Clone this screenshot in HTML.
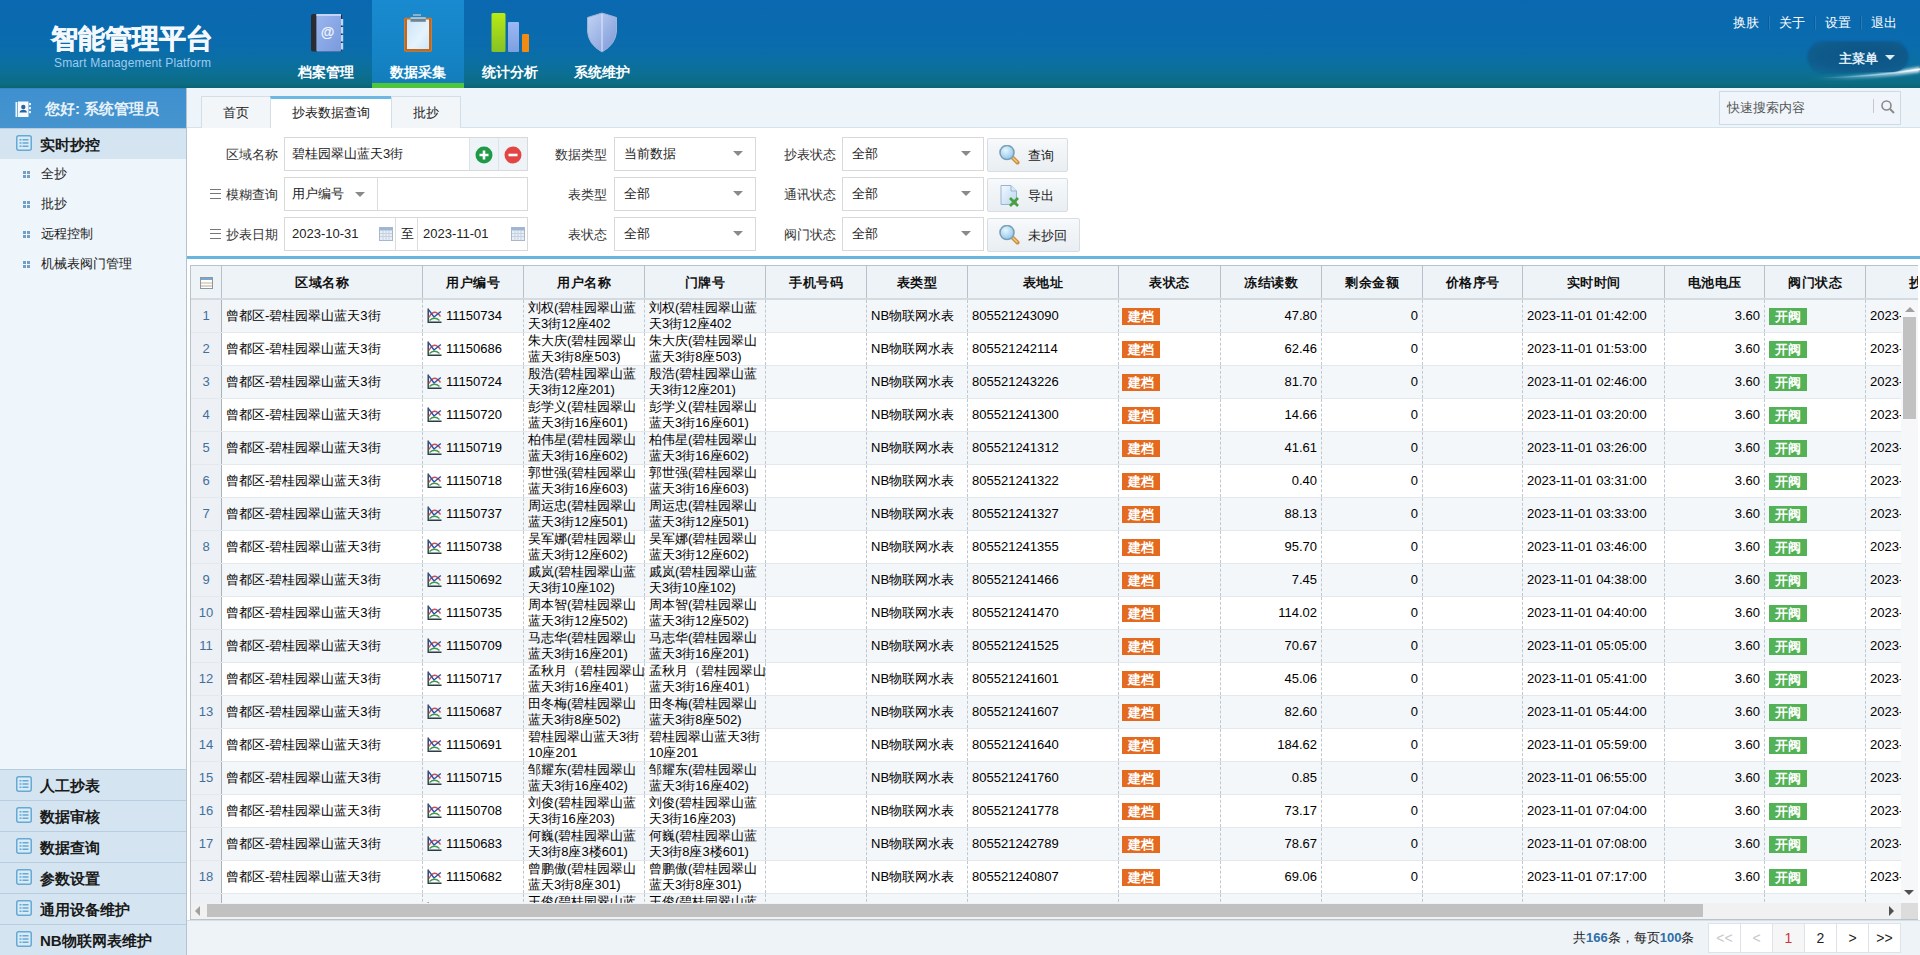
<!DOCTYPE html>
<html><head><meta charset="utf-8">
<style>
*{box-sizing:border-box;}
html,body{margin:0;padding:0;}
body{width:1920px;height:955px;overflow:hidden;position:relative;font-family:"Liberation Sans",sans-serif;font-size:13px;color:#222;background:#fff;}
.abs{position:absolute;}
/* header */
#hdr{position:absolute;left:0;top:0;width:1920px;height:88px;background:linear-gradient(to bottom,#0a68b0 0%,#0a6bad 50%,#0b6fa3 70%,#0c6f92 85%,#0b6c82 95%,#0a6574 100%);}
#logo{position:absolute;left:51px;top:23px;font-size:27px;font-weight:bold;color:#f4f8fc;letter-spacing:0px;line-height:32px;white-space:nowrap;-webkit-text-stroke:0.6px #f4f8fc;}
#logosub{position:absolute;left:54px;top:56px;font-size:12px;letter-spacing:0.15px;color:#9ccbf0;white-space:nowrap;line-height:14px;}
.nav{position:absolute;top:0;width:92px;height:88px;text-align:center;}
.nav.act{background:linear-gradient(to bottom,#1a8ad0 0%,#1584c6 60%,#137cb9 100%);}
.nav.act:after{content:"";position:absolute;left:0;bottom:0;width:92px;height:5px;background:#4fc63a;}
.nav .lbl{position:absolute;left:0;top:63px;width:92px;font-size:14px;font-weight:bold;color:#fff;line-height:18px;}
.nav svg{position:absolute;left:26px;top:11px;}
#toplinks{position:absolute;left:1733px;top:14px;font-size:13px;color:#fff;white-space:nowrap;line-height:18px;}
#toplinks span{display:inline-block;}
#toplinks i{display:inline-block;width:1px;height:14px;background:#0c5c98;box-shadow:1px 0 0 rgba(120,180,230,.25);vertical-align:-3px;margin:0 10px 0 9px;}
#mainmenu{position:absolute;left:1808px;top:42px;width:100px;height:30px;border-radius:15px;background:radial-gradient(ellipse at 55% 45%,#0d5585 0%,#0e5a8b 60%,#12679a 100%);box-shadow:0 0 3px rgba(0,40,80,.35);}
#mainmenu .t{position:absolute;left:31px;top:8px;font-size:13px;font-weight:bold;color:#dfeefa;line-height:18px;}
#mainmenu .ar{position:absolute;left:77px;top:13px;width:0;height:0;border-left:5px solid transparent;border-right:5px solid transparent;border-top:5px solid #dfeefa;}
/* sidebar */
#side{position:absolute;left:0;top:88px;width:187px;height:867px;background:#eef5fb;border-right:1px solid #b5c3ce;}
#sidehd{position:absolute;left:0;top:0;width:186px;height:40px;background:linear-gradient(#3f90cf,#4594cf);border-top:1px solid #3a86c4;}
#sidehd .t{position:absolute;left:45px;top:11px;font-size:15px;font-weight:bold;color:#e8f2fa;line-height:18px;white-space:nowrap;}
.sec{position:absolute;left:0;width:186px;height:31px;background:#d4e4f0;border-top:1px solid #b8cde0;}
.sec .t{position:absolute;left:40px;top:7px;font-size:15px;font-weight:bold;color:#1a1a1a;line-height:18px;white-space:nowrap;}
.sec svg{position:absolute;left:16px;top:6px;}
.item{position:absolute;left:0;width:186px;height:30px;}
.item .t{position:absolute;left:41px;top:7px;font-size:13px;color:#222;line-height:16px;white-space:nowrap;}
.item .b{position:absolute;left:23px;top:12px;width:7px;height:7px;}
.item .b i{position:absolute;width:3px;height:3px;background:#739fc4;}
/* tabs */
#tabbar{position:absolute;left:187px;top:88px;width:1733px;height:40px;background:#eef5fa;border-bottom:1px solid #d6e2ec;}
.tab{position:absolute;top:8px;height:32px;background:#f2f6f9;border:1px solid #d4dee6;border-bottom:none;text-align:center;font-size:13px;line-height:32px;color:#222;}
.tab.act{background:#fff;border-top:3px solid #6bb8e2;line-height:28px;height:33px;}
#search{position:absolute;left:1719px;top:91px;width:182px;height:34px;background:#eff5fa;border:1px solid #d0dae2;}
#search .t{position:absolute;left:7px;top:8px;font-size:13px;color:#555;line-height:16px;}
#search .sep{position:absolute;left:153px;top:7px;width:1px;height:14px;background:#c8c8c8;}
/* form */
#form{position:absolute;left:187px;top:128px;width:1733px;height:128px;background:#fff;}
.lb{position:absolute;font-size:13px;color:#333;line-height:16px;white-space:nowrap;text-align:right;}
.box{position:absolute;height:34px;border:1px solid #d9d9d9;background:#fff;}
.box .v{position:absolute;left:7px;top:8px;font-size:13px;color:#222;line-height:16px;white-space:nowrap;}
.arr{position:absolute;width:0;height:0;border-left:5px solid transparent;border-right:5px solid transparent;border-top:5px solid #8a8a8a;}
.btn{position:absolute;height:34px;border:1px solid #d6dde3;border-radius:2px;background:linear-gradient(#f7f9fb,#e9eef2);}
.btn .v{position:absolute;left:40px;top:9px;font-size:13px;color:#222;line-height:16px;white-space:nowrap;}
.btn svg{position:absolute;left:10px;top:6px;}
.ham{position:absolute;width:11px;height:10px;border-top:1.5px solid #777;border-bottom:1.5px solid #777;}
.ham:after{content:"";position:absolute;left:0;top:2.8px;width:11px;height:1.5px;background:#777;}
#bluel{position:absolute;left:187px;top:256px;width:1733px;height:3px;background:#68b6e0;}
#gridarea{position:absolute;left:187px;top:259px;width:1733px;height:661px;background:#fff;}
/* grid */
#grid{position:absolute;left:190px;top:265px;width:1728px;height:655px;border:1px solid #b9c3cb;border-right:none;background:#fff;overflow:hidden;}
#ghead{position:absolute;left:0;top:0;width:1800px;height:34px;background:#eef3f7;border-bottom:2px solid #d3dae0;}
.hc{position:absolute;top:0;height:32px;border-right:1px solid #b8c1c9;font-weight:bold;font-size:13px;text-align:center;line-height:34px;letter-spacing:0.5px;color:#111;white-space:nowrap;}
.chk{position:absolute;left:9px;top:11px;width:13px;height:12px;border:1px solid #8d979f;background:linear-gradient(#79a7d2 0,#79a7d2 2px,#fff 2px,#fff 4px,#e2d8c8 4px,#e2d8c8 6px,#fff 6px,#fff 7px,#d8d4cc 7px,#d8d4cc 9px,#fff 9px);}
#gbody{position:absolute;left:0;top:34px;width:1710px;height:603px;overflow:hidden;}
.row{position:absolute;left:0;width:1800px;height:33px;border-bottom:1px solid #e3e8ed;}
.row.odd{background:#f4f7fa;}
.row.even{background:#fff;}
.c{position:absolute;top:0;height:32px;border-right:1px dashed #bfc8d0;font-size:13px;color:#000;white-space:nowrap;overflow:hidden;}
.c.rn{background:#edf1f5;color:#3f6f9c;text-align:center;line-height:32px;border-right:1px solid #aab3bb;font-size:13px;}
.c.l{line-height:32px;padding-left:4px;}
.c.bdc{line-height:32px;padding-left:3px;}
.c.r{line-height:32px;text-align:right;padding-right:4px;}
.c.w{white-space:nowrap;line-height:16px;padding:0 0 0 4px;}
.c .ic{vertical-align:-3px;margin-right:4px;margin-left:0px;}
.num{font-size:13px;}
.bd{display:inline-block;height:17px;line-height:17px;width:38px;text-align:center;padding:0;font-weight:bold;color:#fff;font-size:13px;vertical-align:middle;position:relative;top:0px;}
.bd.or{background:#e36a1e;}
.bd.gr{background:#53b255;}
#vscroll{position:absolute;left:1710px;top:34px;width:17px;height:603px;background:#f5f7f9;}
#vscroll .th{position:absolute;left:2px;top:17px;width:13px;height:102px;background:#c1c1c1;}
#hscroll{position:absolute;left:0;top:637px;width:1710px;height:16px;background:#f1f1f1;}
#hscroll .th{position:absolute;left:16px;top:1px;width:1496px;height:13px;background:#c1c1c1;}
#corner{position:absolute;left:1710px;top:637px;width:17px;height:16px;background:#dcdcdc;}
.tri{position:absolute;width:0;height:0;}
/* footer */
#footer{position:absolute;left:187px;top:920px;width:1733px;height:35px;background:#eef3f7;border-top:1px solid #d8dee4;}
#pinfo{position:absolute;left:1386px;top:9px;font-size:13px;color:#222;line-height:16px;white-space:nowrap;}
#pinfo b{color:#2f6fa8;font-weight:bold;}
.pg{position:absolute;top:2px;width:33px;height:30px;border:1px solid #dde3e8;background:#fff;text-align:center;line-height:28px;font-size:14px;color:#222;}
</style></head><body>

<div id="hdr">
  <div id="logo">智能管理平台</div>
  <div id="logosub">Smart Management Platform</div>

  <div class="nav" style="left:280px">
    <svg width="40" height="42" viewBox="0 0 40 42">
      <defs><linearGradient id="bk" x1="0" y1="0" x2="1" y2="1"><stop offset="0" stop-color="#9ab6ee"/><stop offset="1" stop-color="#7a9ade"/></linearGradient></defs>
      <rect x="5" y="3" width="31" height="37.5" rx="2" fill="#2b2c31"/>
      <rect x="10.4" y="3" width="24.6" height="37.5" rx="1" fill="url(#bk)"/>
      <rect x="10.4" y="3" width="24.6" height="2" fill="#c4d4f4"/>
      <rect x="35" y="8" width="2.2" height="6.5" fill="#c6d6f2"/><rect x="35" y="16" width="2.2" height="6.5" fill="#c6d6f2"/><rect x="35" y="24" width="2.2" height="6.5" fill="#c6d6f2"/><rect x="35" y="32" width="2.2" height="6.5" fill="#c6d6f2"/>
      <text x="21.7" y="26" font-size="14" font-weight="bold" font-family="Liberation Sans" fill="#f2f6ff" text-anchor="middle">@</text>
    </svg>
    <div class="lbl">档案管理</div>
  </div>
  <div class="nav act" style="left:372px">
    <svg width="40" height="42" viewBox="0 0 40 42">
      <defs><linearGradient id="pp" x1="0" y1="0" x2="1" y2="1"><stop offset="0" stop-color="#c9e4f8"/><stop offset=".6" stop-color="#e6f3fc"/><stop offset="1" stop-color="#cfe6f7"/></linearGradient></defs>
      <rect x="6" y="6.8" width="28" height="34" rx="1" fill="#b96a28"/>
      <rect x="6.5" y="7.3" width="27" height="33" rx="1" fill="none" stroke="#d98a40" stroke-width=".8" opacity=".7"/>
      <rect x="9" y="8.5" width="22" height="29.5" fill="url(#pp)"/>
      <rect x="12.5" y="6.3" width="15.3" height="4.5" fill="#6f8594"/>
      <rect x="12.5" y="6.3" width="15.3" height="1.5" fill="#c3d2dc"/>
      <rect x="15" y="3" width="8" height="2" fill="#a9bccb" opacity=".8"/>
    </svg>
    <div class="lbl">数据采集</div>
  </div>
  <div class="nav" style="left:464px">
    <svg width="40" height="42" viewBox="0 0 40 42">
      <defs><linearGradient id="gg" x1="0" y1="0" x2="0" y2="1"><stop offset="0" stop-color="#b8ea12"/><stop offset="1" stop-color="#86c226"/></linearGradient><linearGradient id="bg2" x1="0" y1="0" x2="0" y2="1"><stop offset="0" stop-color="#9ab8f4"/><stop offset="1" stop-color="#7e9fe0"/></linearGradient></defs>
      <rect x="1.5" y="2" width="14" height="39" rx="1.5" fill="url(#gg)"/>
      <rect x="18" y="11" width="11" height="30" rx="1" fill="url(#bg2)"/>
      <rect x="32" y="23" width="7" height="18" rx="1" fill="#f38a12"/>
    </svg>
    <div class="lbl">统计分析</div>
  </div>
  <div class="nav" style="left:556px">
    <svg width="40" height="42" viewBox="0 0 40 42">
      <defs><linearGradient id="sg" x1="0" y1="0" x2="1" y2="1"><stop offset="0" stop-color="#c2d4f4"/><stop offset="1" stop-color="#7c97d8"/></linearGradient></defs>
      <path d="M20 2 L34.5 6.5 L34.5 20 Q34 33 20 41 Q6 33 5.5 20 L5.5 6.5 Z" fill="url(#sg)" stroke="#9fb4d4" stroke-width="1"/>
      <path d="M20 3 L20 40" stroke="#dfe8fa" stroke-width="1.5" opacity=".7"/>
    </svg>
    <div class="lbl">系统维护</div>
  </div>

  <div id="toplinks"><span>换肤</span><i></i><span>关于</span><i></i><span>设置</span><i></i><span>退出</span></div>
  <svg class="abs" style="left:1760px;top:58px" width="160" height="30" viewBox="0 0 160 30"><defs><linearGradient id="sw" x1="0" y1="0" x2="1" y2="0"><stop offset="0" stop-color="#bfe6ff" stop-opacity="0"/><stop offset=".6" stop-color="#cdeeff" stop-opacity=".55"/><stop offset="1" stop-color="#ffffff" stop-opacity=".95"/></linearGradient><filter id="bl" x="-20%" y="-100%" width="140%" height="300%"><feGaussianBlur stdDeviation="1.6"/></filter></defs><path d="M50 20 Q110 18 160 9 L160 14 Q110 22 50 21Z" fill="url(#sw)" filter="url(#bl)"/><path d="M60 19.8 Q115 17.5 160 10.5 L160 12 Q115 19.5 60 20.5Z" fill="url(#sw)"/></svg>
  <div id="mainmenu"><span class="t">主菜单</span><span class="ar"></span></div>
</div>

<div id="side">
  <div id="sidehd">
    <svg class="abs" style="left:15px;top:12px" width="17" height="17" viewBox="0 0 17 17"><rect x="0.5" y="1" width="1.8" height="15" fill="#f2f7fc"/><rect x="3" y="0.5" width="10.5" height="15.5" fill="#f7fafd"/><rect x="14" y="2" width="2" height="2.2" fill="#e6f0fa"/><rect x="14" y="6" width="2" height="2.2" fill="#e6f0fa"/><rect x="14" y="10" width="2" height="2.2" fill="#e6f0fa"/><circle cx="8.3" cy="6" r="2.2" fill="#2a659f"/><path d="M4.5 11.5 Q5 8.8 8.3 8.8 Q11.6 8.8 12 11.5Z" fill="#2a659f"/></svg>
    <span class="t">您好: 系统管理员</span>
  </div>
  <div class="sec" style="top:40px;height:31px;">
    <svg width="16" height="16" viewBox="0 0 16 16"><rect x="0.75" y="0.75" width="14.5" height="14.5" rx="2" fill="#d9ebf7" stroke="#67a9d3" stroke-width="1.5"/><rect x="3.5" y="4" width="2" height="1.5" fill="#67a9d3"/><rect x="6.5" y="4" width="6" height="1.5" fill="#67a9d3"/><rect x="3.5" y="7.25" width="2" height="1.5" fill="#67a9d3"/><rect x="6.5" y="7.25" width="6" height="1.5" fill="#67a9d3"/><rect x="3.5" y="10.5" width="2" height="1.5" fill="#67a9d3"/><rect x="6.5" y="10.5" width="6" height="1.5" fill="#67a9d3"/></svg>
    <span class="t">实时抄控</span>
  </div>
  <div class="item" style="top:71px"><span class="b"><i style="left:0;top:0"></i><i style="left:4px;top:0"></i><i style="left:0;top:4px"></i><i style="left:4px;top:4px"></i></span><span class="t">全抄</span></div>
  <div class="item" style="top:101px"><span class="b"><i style="left:0;top:0"></i><i style="left:4px;top:0"></i><i style="left:0;top:4px"></i><i style="left:4px;top:4px"></i></span><span class="t">批抄</span></div>
  <div class="item" style="top:131px"><span class="b"><i style="left:0;top:0"></i><i style="left:4px;top:0"></i><i style="left:0;top:4px"></i><i style="left:4px;top:4px"></i></span><span class="t">远程控制</span></div>
  <div class="item" style="top:161px"><span class="b"><i style="left:0;top:0"></i><i style="left:4px;top:0"></i><i style="left:0;top:4px"></i><i style="left:4px;top:4px"></i></span><span class="t">机械表阀门管理</span></div>

  <div class="sec" style="top:681px"><svg width="16" height="16" viewBox="0 0 16 16"><rect x="0.75" y="0.75" width="14.5" height="14.5" rx="2" fill="#d9ebf7" stroke="#67a9d3" stroke-width="1.5"/><rect x="3.5" y="4" width="2" height="1.5" fill="#67a9d3"/><rect x="6.5" y="4" width="6" height="1.5" fill="#67a9d3"/><rect x="3.5" y="7.25" width="2" height="1.5" fill="#67a9d3"/><rect x="6.5" y="7.25" width="6" height="1.5" fill="#67a9d3"/><rect x="3.5" y="10.5" width="2" height="1.5" fill="#67a9d3"/><rect x="6.5" y="10.5" width="6" height="1.5" fill="#67a9d3"/></svg><span class="t">人工抄表</span></div>
<div class="sec" style="top:712px"><svg width="16" height="16" viewBox="0 0 16 16"><rect x="0.75" y="0.75" width="14.5" height="14.5" rx="2" fill="#d9ebf7" stroke="#67a9d3" stroke-width="1.5"/><rect x="3.5" y="4" width="2" height="1.5" fill="#67a9d3"/><rect x="6.5" y="4" width="6" height="1.5" fill="#67a9d3"/><rect x="3.5" y="7.25" width="2" height="1.5" fill="#67a9d3"/><rect x="6.5" y="7.25" width="6" height="1.5" fill="#67a9d3"/><rect x="3.5" y="10.5" width="2" height="1.5" fill="#67a9d3"/><rect x="6.5" y="10.5" width="6" height="1.5" fill="#67a9d3"/></svg><span class="t">数据审核</span></div>
<div class="sec" style="top:743px"><svg width="16" height="16" viewBox="0 0 16 16"><rect x="0.75" y="0.75" width="14.5" height="14.5" rx="2" fill="#d9ebf7" stroke="#67a9d3" stroke-width="1.5"/><rect x="3.5" y="4" width="2" height="1.5" fill="#67a9d3"/><rect x="6.5" y="4" width="6" height="1.5" fill="#67a9d3"/><rect x="3.5" y="7.25" width="2" height="1.5" fill="#67a9d3"/><rect x="6.5" y="7.25" width="6" height="1.5" fill="#67a9d3"/><rect x="3.5" y="10.5" width="2" height="1.5" fill="#67a9d3"/><rect x="6.5" y="10.5" width="6" height="1.5" fill="#67a9d3"/></svg><span class="t">数据查询</span></div>
<div class="sec" style="top:774px"><svg width="16" height="16" viewBox="0 0 16 16"><rect x="0.75" y="0.75" width="14.5" height="14.5" rx="2" fill="#d9ebf7" stroke="#67a9d3" stroke-width="1.5"/><rect x="3.5" y="4" width="2" height="1.5" fill="#67a9d3"/><rect x="6.5" y="4" width="6" height="1.5" fill="#67a9d3"/><rect x="3.5" y="7.25" width="2" height="1.5" fill="#67a9d3"/><rect x="6.5" y="7.25" width="6" height="1.5" fill="#67a9d3"/><rect x="3.5" y="10.5" width="2" height="1.5" fill="#67a9d3"/><rect x="6.5" y="10.5" width="6" height="1.5" fill="#67a9d3"/></svg><span class="t">参数设置</span></div>
<div class="sec" style="top:805px"><svg width="16" height="16" viewBox="0 0 16 16"><rect x="0.75" y="0.75" width="14.5" height="14.5" rx="2" fill="#d9ebf7" stroke="#67a9d3" stroke-width="1.5"/><rect x="3.5" y="4" width="2" height="1.5" fill="#67a9d3"/><rect x="6.5" y="4" width="6" height="1.5" fill="#67a9d3"/><rect x="3.5" y="7.25" width="2" height="1.5" fill="#67a9d3"/><rect x="6.5" y="7.25" width="6" height="1.5" fill="#67a9d3"/><rect x="3.5" y="10.5" width="2" height="1.5" fill="#67a9d3"/><rect x="6.5" y="10.5" width="6" height="1.5" fill="#67a9d3"/></svg><span class="t">通用设备维护</span></div>
<div class="sec" style="top:836px"><svg width="16" height="16" viewBox="0 0 16 16"><rect x="0.75" y="0.75" width="14.5" height="14.5" rx="2" fill="#d9ebf7" stroke="#67a9d3" stroke-width="1.5"/><rect x="3.5" y="4" width="2" height="1.5" fill="#67a9d3"/><rect x="6.5" y="4" width="6" height="1.5" fill="#67a9d3"/><rect x="3.5" y="7.25" width="2" height="1.5" fill="#67a9d3"/><rect x="6.5" y="7.25" width="6" height="1.5" fill="#67a9d3"/><rect x="3.5" y="10.5" width="2" height="1.5" fill="#67a9d3"/><rect x="6.5" y="10.5" width="6" height="1.5" fill="#67a9d3"/></svg><span class="t">NB物联网表维护</span></div>
</div>

<div id="tabbar">
  <div class="tab" style="left:14px;width:70px">首页</div>
  <div class="tab act" style="left:83px;width:122px">抄表数据查询</div>
  <div class="tab" style="left:204px;width:70px">批抄</div>
</div>
<div id="search"><span class="t">快速搜索内容</span><span class="sep"></span>
  <svg class="abs" style="left:160px;top:7px" width="16" height="16" viewBox="0 0 16 16"><circle cx="6.5" cy="6.5" r="4.5" fill="none" stroke="#8a8a8a" stroke-width="1.6"/><path d="M10 10 L14 14" stroke="#8a8a8a" stroke-width="2"/></svg>
</div>

<div id="form"></div>
<div class="lb" style="left:218px;top:147px;width:60px">区域名称</div>
<div class="box" style="left:284px;top:137px;width:244px"><span class="v">碧桂园翠山蓝天3街</span></div>
<div class="abs" style="left:469px;top:138px;width:29px;height:32px;background:#eef3f7;border-left:1px solid #dde3e8;"></div>
<div class="abs" style="left:498px;top:138px;width:29px;height:32px;background:#eef3f7;border-left:1px solid #dde3e8;"></div>
<div class="abs" style="left:475px;top:146px;width:18px;height:18px"><svg width="18" height="18" viewBox="0 0 18 18"><circle cx="9" cy="9" r="8.5" fill="#1e9a47"/><path d="M4.5 9H13.5M9 4.5V13.5" stroke="#fff" stroke-width="2.6"/></svg></div>
<div class="abs" style="left:504px;top:146px;width:18px;height:18px"><svg width="18" height="18" viewBox="0 0 18 18"><circle cx="9" cy="9" r="8.5" fill="#e34545"/><path d="M4.5 9H13.5" stroke="#fff" stroke-width="2.6"/></svg></div>
<div class="ham" style="left:210px;top:189px"></div>
<div class="lb" style="left:218px;top:187px;width:60px">模糊查询</div>
<div class="box" style="left:284px;top:177px;width:244px"><span class="v">用户编号</span><span class="arr" style="left:70px;top:14px"></span><span class="abs" style="left:92px;top:0;width:1px;height:32px;background:#dcdcdc"></span></div>
<div class="ham" style="left:210px;top:229px"></div>
<div class="lb" style="left:218px;top:227px;width:60px">抄表日期</div>
<div class="box" style="left:284px;top:217px;width:244px"><span class="v">2023-10-31</span><span class="abs" style="left:94px;top:9px"><svg width="14" height="14" viewBox="0 0 14 14"><rect x="0.5" y="0.5" width="13" height="13" fill="#e8eef6" stroke="#a8b8cc"/><rect x="0.5" y="0.5" width="13" height="3" fill="#9fb6d2"/><path d="M1 6.5H13M1 9.5H13M4 4V13M7 4V13M10 4V13" stroke="#c5d2e2" stroke-width="1"/></svg></span><span class="abs" style="left:110px;top:0;width:1px;height:32px;background:#dcdcdc"></span><span class="v" style="left:116px">至</span><span class="abs" style="left:132px;top:0;width:1px;height:32px;background:#dcdcdc"></span><span class="v" style="left:138px">2023-11-01</span><span class="abs" style="left:226px;top:9px"><svg width="14" height="14" viewBox="0 0 14 14"><rect x="0.5" y="0.5" width="13" height="13" fill="#e8eef6" stroke="#a8b8cc"/><rect x="0.5" y="0.5" width="13" height="3" fill="#9fb6d2"/><path d="M1 6.5H13M1 9.5H13M4 4V13M7 4V13M10 4V13" stroke="#c5d2e2" stroke-width="1"/></svg></span></div>
<div class="lb" style="left:547px;top:147px;width:60px">数据类型</div>
<div class="box" style="left:614px;top:137px;width:142px"><span class="v" style="left:9px">当前数据</span><span class="arr" style="left:118px;top:13px"></span></div>
<div class="lb" style="left:547px;top:187px;width:60px">表类型</div>
<div class="box" style="left:614px;top:177px;width:142px"><span class="v" style="left:9px">全部</span><span class="arr" style="left:118px;top:13px"></span></div>
<div class="lb" style="left:547px;top:227px;width:60px">表状态</div>
<div class="box" style="left:614px;top:217px;width:142px"><span class="v" style="left:9px">全部</span><span class="arr" style="left:118px;top:13px"></span></div>
<div class="lb" style="left:776px;top:147px;width:60px">抄表状态</div>
<div class="box" style="left:842px;top:137px;width:142px"><span class="v" style="left:9px">全部</span><span class="arr" style="left:118px;top:13px"></span></div>
<div class="lb" style="left:776px;top:187px;width:60px">通讯状态</div>
<div class="box" style="left:842px;top:177px;width:142px"><span class="v" style="left:9px">全部</span><span class="arr" style="left:118px;top:13px"></span></div>
<div class="lb" style="left:776px;top:227px;width:60px">阀门状态</div>
<div class="box" style="left:842px;top:217px;width:142px"><span class="v" style="left:9px">全部</span><span class="arr" style="left:118px;top:13px"></span></div>
<div class="btn" style="left:987px;top:138px;width:81px"><svg width="24" height="22" viewBox="0 0 24 22"><defs><radialGradient id="lg" cx=".4" cy=".35" r=".7"><stop offset="0" stop-color="#e8f6fe"/><stop offset="1" stop-color="#8cc6ea"/></radialGradient></defs><path d="M14 12 L19.5 17.5" stroke="#c98f3c" stroke-width="4" stroke-linecap="round"/><path d="M14 12 L19 17" stroke="#f0c884" stroke-width="1.6" stroke-linecap="round"/><circle cx="9" cy="7.5" r="7" fill="url(#lg)" stroke="#7a9fb8" stroke-width="1.6"/></svg><span class="v">查询</span></div>
<div class="btn" style="left:987px;top:178px;width:81px"><div class="abs" style="left:0;top:0;line-height:0"><svg width="24" height="24" viewBox="0 0 24 24"><defs><linearGradient id="dg" x1="0" y1="0" x2="1" y2="1"><stop offset="0" stop-color="#f4f9fe"/><stop offset="1" stop-color="#b9d6f0"/></linearGradient></defs><path d="M3 0.5H13L18.5 6V19.5H3Z" fill="url(#dg)" stroke="#94b6d4" stroke-width="1"/><path d="M13 0.5V6H18.5" fill="#dbe9f6" stroke="#94b6d4" stroke-width="1"/><path d="M12 13L20 21M20 13L12 21" stroke="#4aa040" stroke-width="2.8"/></svg></div><span class="v">导出</span></div>
<div class="btn" style="left:987px;top:218px;width:93px"><svg width="24" height="22" viewBox="0 0 24 22"><defs><radialGradient id="lg" cx=".4" cy=".35" r=".7"><stop offset="0" stop-color="#e8f6fe"/><stop offset="1" stop-color="#8cc6ea"/></radialGradient></defs><path d="M14 12 L19.5 17.5" stroke="#c98f3c" stroke-width="4" stroke-linecap="round"/><path d="M14 12 L19 17" stroke="#f0c884" stroke-width="1.6" stroke-linecap="round"/><circle cx="9" cy="7.5" r="7" fill="url(#lg)" stroke="#7a9fb8" stroke-width="1.6"/></svg><span class="v">未抄回</span></div>
<div id="bluel"></div>
<div id="gridarea"></div>

<div id="grid">
  <div id="ghead">
<div class="hc" style="left:0px;width:31px"><span class="chk"></span></div>
<div class="hc" style="left:31px;width:201px">区域名称</div>
<div class="hc" style="left:232px;width:101px">用户编号</div>
<div class="hc" style="left:333px;width:121px">用户名称</div>
<div class="hc" style="left:454px;width:121px">门牌号</div>
<div class="hc" style="left:575px;width:101px">手机号码</div>
<div class="hc" style="left:676px;width:101px">表类型</div>
<div class="hc" style="left:777px;width:151px">表地址</div>
<div class="hc" style="left:928px;width:102px">表状态</div>
<div class="hc" style="left:1030px;width:101px">冻结读数</div>
<div class="hc" style="left:1131px;width:101px">剩余金额</div>
<div class="hc" style="left:1232px;width:100px">价格序号</div>
<div class="hc" style="left:1332px;width:142px">实时时间</div>
<div class="hc" style="left:1474px;width:100px">电池电压</div>
<div class="hc" style="left:1574px;width:101px">阀门状态</div>
<div class="hc" style="left:1675px;width:140px">抄表时间</div>
  </div>
  <div id="gbody">
<div class="row odd" style="top:0px"><div class="c rn" style="left:0px;width:31px">1</div><div class="c l" style="left:31px;width:201px">曾都区-碧桂园翠山蓝天3街</div><div class="c l" style="left:232px;width:101px"><svg class="ic" width="15" height="15" viewBox="0 0 15 15"><path d="M1.2 0.5V14.2H14.5" stroke="#2c3c48" stroke-width="1.4" fill="none"/><path d="M2 9.5Q7 -0.5 13.5 8.5" stroke="#c9514f" stroke-width="1.3" fill="none"/><path d="M1.8 2L7 9L13.8 3.5" stroke="#2f4fae" stroke-width="1.4" fill="none"/><path d="M2.5 12.5Q7.5 8 12.5 12.5" stroke="#3f9a45" stroke-width="1.3" fill="none"/></svg><span class="num">11150734</span></div><div class="c w" style="left:333px;width:121px">刘权(碧桂园翠山蓝<br>天3街12座402</div><div class="c w" style="left:454px;width:121px">刘权(碧桂园翠山蓝<br>天3街12座402</div><div class="c l" style="left:575px;width:101px"></div><div class="c l" style="left:676px;width:101px">NB物联网水表</div><div class="c l" style="left:777px;width:151px"><span class="num">805521243090</span></div><div class="c bdc" style="left:928px;width:102px"><span class="bd or">建档</span></div><div class="c r" style="left:1030px;width:101px"><span class="num">47.80</span></div><div class="c r" style="left:1131px;width:101px">0</div><div class="c l" style="left:1232px;width:100px"></div><div class="c l" style="left:1332px;width:142px"><span class="num">2023-11-01 01:42:00</span></div><div class="c r" style="left:1474px;width:100px"><span class="num">3.60</span></div><div class="c l" style="left:1574px;width:101px"><span class="bd gr">开阀</span></div><div class="c l" style="left:1675px;width:140px"><span class="num">2023-11-01</span></div></div>
<div class="row even" style="top:33px"><div class="c rn" style="left:0px;width:31px">2</div><div class="c l" style="left:31px;width:201px">曾都区-碧桂园翠山蓝天3街</div><div class="c l" style="left:232px;width:101px"><svg class="ic" width="15" height="15" viewBox="0 0 15 15"><path d="M1.2 0.5V14.2H14.5" stroke="#2c3c48" stroke-width="1.4" fill="none"/><path d="M2 9.5Q7 -0.5 13.5 8.5" stroke="#c9514f" stroke-width="1.3" fill="none"/><path d="M1.8 2L7 9L13.8 3.5" stroke="#2f4fae" stroke-width="1.4" fill="none"/><path d="M2.5 12.5Q7.5 8 12.5 12.5" stroke="#3f9a45" stroke-width="1.3" fill="none"/></svg><span class="num">11150686</span></div><div class="c w" style="left:333px;width:121px">朱大庆(碧桂园翠山<br>蓝天3街8座503)</div><div class="c w" style="left:454px;width:121px">朱大庆(碧桂园翠山<br>蓝天3街8座503)</div><div class="c l" style="left:575px;width:101px"></div><div class="c l" style="left:676px;width:101px">NB物联网水表</div><div class="c l" style="left:777px;width:151px"><span class="num">805521242114</span></div><div class="c bdc" style="left:928px;width:102px"><span class="bd or">建档</span></div><div class="c r" style="left:1030px;width:101px"><span class="num">62.46</span></div><div class="c r" style="left:1131px;width:101px">0</div><div class="c l" style="left:1232px;width:100px"></div><div class="c l" style="left:1332px;width:142px"><span class="num">2023-11-01 01:53:00</span></div><div class="c r" style="left:1474px;width:100px"><span class="num">3.60</span></div><div class="c l" style="left:1574px;width:101px"><span class="bd gr">开阀</span></div><div class="c l" style="left:1675px;width:140px"><span class="num">2023-11-01</span></div></div>
<div class="row odd" style="top:66px"><div class="c rn" style="left:0px;width:31px">3</div><div class="c l" style="left:31px;width:201px">曾都区-碧桂园翠山蓝天3街</div><div class="c l" style="left:232px;width:101px"><svg class="ic" width="15" height="15" viewBox="0 0 15 15"><path d="M1.2 0.5V14.2H14.5" stroke="#2c3c48" stroke-width="1.4" fill="none"/><path d="M2 9.5Q7 -0.5 13.5 8.5" stroke="#c9514f" stroke-width="1.3" fill="none"/><path d="M1.8 2L7 9L13.8 3.5" stroke="#2f4fae" stroke-width="1.4" fill="none"/><path d="M2.5 12.5Q7.5 8 12.5 12.5" stroke="#3f9a45" stroke-width="1.3" fill="none"/></svg><span class="num">11150724</span></div><div class="c w" style="left:333px;width:121px">殷浩(碧桂园翠山蓝<br>天3街12座201)</div><div class="c w" style="left:454px;width:121px">殷浩(碧桂园翠山蓝<br>天3街12座201)</div><div class="c l" style="left:575px;width:101px"></div><div class="c l" style="left:676px;width:101px">NB物联网水表</div><div class="c l" style="left:777px;width:151px"><span class="num">805521243226</span></div><div class="c bdc" style="left:928px;width:102px"><span class="bd or">建档</span></div><div class="c r" style="left:1030px;width:101px"><span class="num">81.70</span></div><div class="c r" style="left:1131px;width:101px">0</div><div class="c l" style="left:1232px;width:100px"></div><div class="c l" style="left:1332px;width:142px"><span class="num">2023-11-01 02:46:00</span></div><div class="c r" style="left:1474px;width:100px"><span class="num">3.60</span></div><div class="c l" style="left:1574px;width:101px"><span class="bd gr">开阀</span></div><div class="c l" style="left:1675px;width:140px"><span class="num">2023-11-01</span></div></div>
<div class="row even" style="top:99px"><div class="c rn" style="left:0px;width:31px">4</div><div class="c l" style="left:31px;width:201px">曾都区-碧桂园翠山蓝天3街</div><div class="c l" style="left:232px;width:101px"><svg class="ic" width="15" height="15" viewBox="0 0 15 15"><path d="M1.2 0.5V14.2H14.5" stroke="#2c3c48" stroke-width="1.4" fill="none"/><path d="M2 9.5Q7 -0.5 13.5 8.5" stroke="#c9514f" stroke-width="1.3" fill="none"/><path d="M1.8 2L7 9L13.8 3.5" stroke="#2f4fae" stroke-width="1.4" fill="none"/><path d="M2.5 12.5Q7.5 8 12.5 12.5" stroke="#3f9a45" stroke-width="1.3" fill="none"/></svg><span class="num">11150720</span></div><div class="c w" style="left:333px;width:121px">彭学义(碧桂园翠山<br>蓝天3街16座601)</div><div class="c w" style="left:454px;width:121px">彭学义(碧桂园翠山<br>蓝天3街16座601)</div><div class="c l" style="left:575px;width:101px"></div><div class="c l" style="left:676px;width:101px">NB物联网水表</div><div class="c l" style="left:777px;width:151px"><span class="num">805521241300</span></div><div class="c bdc" style="left:928px;width:102px"><span class="bd or">建档</span></div><div class="c r" style="left:1030px;width:101px"><span class="num">14.66</span></div><div class="c r" style="left:1131px;width:101px">0</div><div class="c l" style="left:1232px;width:100px"></div><div class="c l" style="left:1332px;width:142px"><span class="num">2023-11-01 03:20:00</span></div><div class="c r" style="left:1474px;width:100px"><span class="num">3.60</span></div><div class="c l" style="left:1574px;width:101px"><span class="bd gr">开阀</span></div><div class="c l" style="left:1675px;width:140px"><span class="num">2023-11-01</span></div></div>
<div class="row odd" style="top:132px"><div class="c rn" style="left:0px;width:31px">5</div><div class="c l" style="left:31px;width:201px">曾都区-碧桂园翠山蓝天3街</div><div class="c l" style="left:232px;width:101px"><svg class="ic" width="15" height="15" viewBox="0 0 15 15"><path d="M1.2 0.5V14.2H14.5" stroke="#2c3c48" stroke-width="1.4" fill="none"/><path d="M2 9.5Q7 -0.5 13.5 8.5" stroke="#c9514f" stroke-width="1.3" fill="none"/><path d="M1.8 2L7 9L13.8 3.5" stroke="#2f4fae" stroke-width="1.4" fill="none"/><path d="M2.5 12.5Q7.5 8 12.5 12.5" stroke="#3f9a45" stroke-width="1.3" fill="none"/></svg><span class="num">11150719</span></div><div class="c w" style="left:333px;width:121px">柏伟星(碧桂园翠山<br>蓝天3街16座602)</div><div class="c w" style="left:454px;width:121px">柏伟星(碧桂园翠山<br>蓝天3街16座602)</div><div class="c l" style="left:575px;width:101px"></div><div class="c l" style="left:676px;width:101px">NB物联网水表</div><div class="c l" style="left:777px;width:151px"><span class="num">805521241312</span></div><div class="c bdc" style="left:928px;width:102px"><span class="bd or">建档</span></div><div class="c r" style="left:1030px;width:101px"><span class="num">41.61</span></div><div class="c r" style="left:1131px;width:101px">0</div><div class="c l" style="left:1232px;width:100px"></div><div class="c l" style="left:1332px;width:142px"><span class="num">2023-11-01 03:26:00</span></div><div class="c r" style="left:1474px;width:100px"><span class="num">3.60</span></div><div class="c l" style="left:1574px;width:101px"><span class="bd gr">开阀</span></div><div class="c l" style="left:1675px;width:140px"><span class="num">2023-11-01</span></div></div>
<div class="row even" style="top:165px"><div class="c rn" style="left:0px;width:31px">6</div><div class="c l" style="left:31px;width:201px">曾都区-碧桂园翠山蓝天3街</div><div class="c l" style="left:232px;width:101px"><svg class="ic" width="15" height="15" viewBox="0 0 15 15"><path d="M1.2 0.5V14.2H14.5" stroke="#2c3c48" stroke-width="1.4" fill="none"/><path d="M2 9.5Q7 -0.5 13.5 8.5" stroke="#c9514f" stroke-width="1.3" fill="none"/><path d="M1.8 2L7 9L13.8 3.5" stroke="#2f4fae" stroke-width="1.4" fill="none"/><path d="M2.5 12.5Q7.5 8 12.5 12.5" stroke="#3f9a45" stroke-width="1.3" fill="none"/></svg><span class="num">11150718</span></div><div class="c w" style="left:333px;width:121px">郭世强(碧桂园翠山<br>蓝天3街16座603)</div><div class="c w" style="left:454px;width:121px">郭世强(碧桂园翠山<br>蓝天3街16座603)</div><div class="c l" style="left:575px;width:101px"></div><div class="c l" style="left:676px;width:101px">NB物联网水表</div><div class="c l" style="left:777px;width:151px"><span class="num">805521241322</span></div><div class="c bdc" style="left:928px;width:102px"><span class="bd or">建档</span></div><div class="c r" style="left:1030px;width:101px"><span class="num">0.40</span></div><div class="c r" style="left:1131px;width:101px">0</div><div class="c l" style="left:1232px;width:100px"></div><div class="c l" style="left:1332px;width:142px"><span class="num">2023-11-01 03:31:00</span></div><div class="c r" style="left:1474px;width:100px"><span class="num">3.60</span></div><div class="c l" style="left:1574px;width:101px"><span class="bd gr">开阀</span></div><div class="c l" style="left:1675px;width:140px"><span class="num">2023-11-01</span></div></div>
<div class="row odd" style="top:198px"><div class="c rn" style="left:0px;width:31px">7</div><div class="c l" style="left:31px;width:201px">曾都区-碧桂园翠山蓝天3街</div><div class="c l" style="left:232px;width:101px"><svg class="ic" width="15" height="15" viewBox="0 0 15 15"><path d="M1.2 0.5V14.2H14.5" stroke="#2c3c48" stroke-width="1.4" fill="none"/><path d="M2 9.5Q7 -0.5 13.5 8.5" stroke="#c9514f" stroke-width="1.3" fill="none"/><path d="M1.8 2L7 9L13.8 3.5" stroke="#2f4fae" stroke-width="1.4" fill="none"/><path d="M2.5 12.5Q7.5 8 12.5 12.5" stroke="#3f9a45" stroke-width="1.3" fill="none"/></svg><span class="num">11150737</span></div><div class="c w" style="left:333px;width:121px">周运忠(碧桂园翠山<br>蓝天3街12座501)</div><div class="c w" style="left:454px;width:121px">周运忠(碧桂园翠山<br>蓝天3街12座501)</div><div class="c l" style="left:575px;width:101px"></div><div class="c l" style="left:676px;width:101px">NB物联网水表</div><div class="c l" style="left:777px;width:151px"><span class="num">805521241327</span></div><div class="c bdc" style="left:928px;width:102px"><span class="bd or">建档</span></div><div class="c r" style="left:1030px;width:101px"><span class="num">88.13</span></div><div class="c r" style="left:1131px;width:101px">0</div><div class="c l" style="left:1232px;width:100px"></div><div class="c l" style="left:1332px;width:142px"><span class="num">2023-11-01 03:33:00</span></div><div class="c r" style="left:1474px;width:100px"><span class="num">3.60</span></div><div class="c l" style="left:1574px;width:101px"><span class="bd gr">开阀</span></div><div class="c l" style="left:1675px;width:140px"><span class="num">2023-11-01</span></div></div>
<div class="row even" style="top:231px"><div class="c rn" style="left:0px;width:31px">8</div><div class="c l" style="left:31px;width:201px">曾都区-碧桂园翠山蓝天3街</div><div class="c l" style="left:232px;width:101px"><svg class="ic" width="15" height="15" viewBox="0 0 15 15"><path d="M1.2 0.5V14.2H14.5" stroke="#2c3c48" stroke-width="1.4" fill="none"/><path d="M2 9.5Q7 -0.5 13.5 8.5" stroke="#c9514f" stroke-width="1.3" fill="none"/><path d="M1.8 2L7 9L13.8 3.5" stroke="#2f4fae" stroke-width="1.4" fill="none"/><path d="M2.5 12.5Q7.5 8 12.5 12.5" stroke="#3f9a45" stroke-width="1.3" fill="none"/></svg><span class="num">11150738</span></div><div class="c w" style="left:333px;width:121px">吴军娜(碧桂园翠山<br>蓝天3街12座602)</div><div class="c w" style="left:454px;width:121px">吴军娜(碧桂园翠山<br>蓝天3街12座602)</div><div class="c l" style="left:575px;width:101px"></div><div class="c l" style="left:676px;width:101px">NB物联网水表</div><div class="c l" style="left:777px;width:151px"><span class="num">805521241355</span></div><div class="c bdc" style="left:928px;width:102px"><span class="bd or">建档</span></div><div class="c r" style="left:1030px;width:101px"><span class="num">95.70</span></div><div class="c r" style="left:1131px;width:101px">0</div><div class="c l" style="left:1232px;width:100px"></div><div class="c l" style="left:1332px;width:142px"><span class="num">2023-11-01 03:46:00</span></div><div class="c r" style="left:1474px;width:100px"><span class="num">3.60</span></div><div class="c l" style="left:1574px;width:101px"><span class="bd gr">开阀</span></div><div class="c l" style="left:1675px;width:140px"><span class="num">2023-11-01</span></div></div>
<div class="row odd" style="top:264px"><div class="c rn" style="left:0px;width:31px">9</div><div class="c l" style="left:31px;width:201px">曾都区-碧桂园翠山蓝天3街</div><div class="c l" style="left:232px;width:101px"><svg class="ic" width="15" height="15" viewBox="0 0 15 15"><path d="M1.2 0.5V14.2H14.5" stroke="#2c3c48" stroke-width="1.4" fill="none"/><path d="M2 9.5Q7 -0.5 13.5 8.5" stroke="#c9514f" stroke-width="1.3" fill="none"/><path d="M1.8 2L7 9L13.8 3.5" stroke="#2f4fae" stroke-width="1.4" fill="none"/><path d="M2.5 12.5Q7.5 8 12.5 12.5" stroke="#3f9a45" stroke-width="1.3" fill="none"/></svg><span class="num">11150692</span></div><div class="c w" style="left:333px;width:121px">戚岚(碧桂园翠山蓝<br>天3街10座102)</div><div class="c w" style="left:454px;width:121px">戚岚(碧桂园翠山蓝<br>天3街10座102)</div><div class="c l" style="left:575px;width:101px"></div><div class="c l" style="left:676px;width:101px">NB物联网水表</div><div class="c l" style="left:777px;width:151px"><span class="num">805521241466</span></div><div class="c bdc" style="left:928px;width:102px"><span class="bd or">建档</span></div><div class="c r" style="left:1030px;width:101px"><span class="num">7.45</span></div><div class="c r" style="left:1131px;width:101px">0</div><div class="c l" style="left:1232px;width:100px"></div><div class="c l" style="left:1332px;width:142px"><span class="num">2023-11-01 04:38:00</span></div><div class="c r" style="left:1474px;width:100px"><span class="num">3.60</span></div><div class="c l" style="left:1574px;width:101px"><span class="bd gr">开阀</span></div><div class="c l" style="left:1675px;width:140px"><span class="num">2023-11-01</span></div></div>
<div class="row even" style="top:297px"><div class="c rn" style="left:0px;width:31px">10</div><div class="c l" style="left:31px;width:201px">曾都区-碧桂园翠山蓝天3街</div><div class="c l" style="left:232px;width:101px"><svg class="ic" width="15" height="15" viewBox="0 0 15 15"><path d="M1.2 0.5V14.2H14.5" stroke="#2c3c48" stroke-width="1.4" fill="none"/><path d="M2 9.5Q7 -0.5 13.5 8.5" stroke="#c9514f" stroke-width="1.3" fill="none"/><path d="M1.8 2L7 9L13.8 3.5" stroke="#2f4fae" stroke-width="1.4" fill="none"/><path d="M2.5 12.5Q7.5 8 12.5 12.5" stroke="#3f9a45" stroke-width="1.3" fill="none"/></svg><span class="num">11150735</span></div><div class="c w" style="left:333px;width:121px">周本智(碧桂园翠山<br>蓝天3街12座502)</div><div class="c w" style="left:454px;width:121px">周本智(碧桂园翠山<br>蓝天3街12座502)</div><div class="c l" style="left:575px;width:101px"></div><div class="c l" style="left:676px;width:101px">NB物联网水表</div><div class="c l" style="left:777px;width:151px"><span class="num">805521241470</span></div><div class="c bdc" style="left:928px;width:102px"><span class="bd or">建档</span></div><div class="c r" style="left:1030px;width:101px"><span class="num">114.02</span></div><div class="c r" style="left:1131px;width:101px">0</div><div class="c l" style="left:1232px;width:100px"></div><div class="c l" style="left:1332px;width:142px"><span class="num">2023-11-01 04:40:00</span></div><div class="c r" style="left:1474px;width:100px"><span class="num">3.60</span></div><div class="c l" style="left:1574px;width:101px"><span class="bd gr">开阀</span></div><div class="c l" style="left:1675px;width:140px"><span class="num">2023-11-01</span></div></div>
<div class="row odd" style="top:330px"><div class="c rn" style="left:0px;width:31px">11</div><div class="c l" style="left:31px;width:201px">曾都区-碧桂园翠山蓝天3街</div><div class="c l" style="left:232px;width:101px"><svg class="ic" width="15" height="15" viewBox="0 0 15 15"><path d="M1.2 0.5V14.2H14.5" stroke="#2c3c48" stroke-width="1.4" fill="none"/><path d="M2 9.5Q7 -0.5 13.5 8.5" stroke="#c9514f" stroke-width="1.3" fill="none"/><path d="M1.8 2L7 9L13.8 3.5" stroke="#2f4fae" stroke-width="1.4" fill="none"/><path d="M2.5 12.5Q7.5 8 12.5 12.5" stroke="#3f9a45" stroke-width="1.3" fill="none"/></svg><span class="num">11150709</span></div><div class="c w" style="left:333px;width:121px">马志华(碧桂园翠山<br>蓝天3街16座201)</div><div class="c w" style="left:454px;width:121px">马志华(碧桂园翠山<br>蓝天3街16座201)</div><div class="c l" style="left:575px;width:101px"></div><div class="c l" style="left:676px;width:101px">NB物联网水表</div><div class="c l" style="left:777px;width:151px"><span class="num">805521241525</span></div><div class="c bdc" style="left:928px;width:102px"><span class="bd or">建档</span></div><div class="c r" style="left:1030px;width:101px"><span class="num">70.67</span></div><div class="c r" style="left:1131px;width:101px">0</div><div class="c l" style="left:1232px;width:100px"></div><div class="c l" style="left:1332px;width:142px"><span class="num">2023-11-01 05:05:00</span></div><div class="c r" style="left:1474px;width:100px"><span class="num">3.60</span></div><div class="c l" style="left:1574px;width:101px"><span class="bd gr">开阀</span></div><div class="c l" style="left:1675px;width:140px"><span class="num">2023-11-01</span></div></div>
<div class="row even" style="top:363px"><div class="c rn" style="left:0px;width:31px">12</div><div class="c l" style="left:31px;width:201px">曾都区-碧桂园翠山蓝天3街</div><div class="c l" style="left:232px;width:101px"><svg class="ic" width="15" height="15" viewBox="0 0 15 15"><path d="M1.2 0.5V14.2H14.5" stroke="#2c3c48" stroke-width="1.4" fill="none"/><path d="M2 9.5Q7 -0.5 13.5 8.5" stroke="#c9514f" stroke-width="1.3" fill="none"/><path d="M1.8 2L7 9L13.8 3.5" stroke="#2f4fae" stroke-width="1.4" fill="none"/><path d="M2.5 12.5Q7.5 8 12.5 12.5" stroke="#3f9a45" stroke-width="1.3" fill="none"/></svg><span class="num">11150717</span></div><div class="c w" style="left:333px;width:121px">孟秋月（碧桂园翠山<br>蓝天3街16座401）</div><div class="c w" style="left:454px;width:121px">孟秋月（碧桂园翠山<br>蓝天3街16座401）</div><div class="c l" style="left:575px;width:101px"></div><div class="c l" style="left:676px;width:101px">NB物联网水表</div><div class="c l" style="left:777px;width:151px"><span class="num">805521241601</span></div><div class="c bdc" style="left:928px;width:102px"><span class="bd or">建档</span></div><div class="c r" style="left:1030px;width:101px"><span class="num">45.06</span></div><div class="c r" style="left:1131px;width:101px">0</div><div class="c l" style="left:1232px;width:100px"></div><div class="c l" style="left:1332px;width:142px"><span class="num">2023-11-01 05:41:00</span></div><div class="c r" style="left:1474px;width:100px"><span class="num">3.60</span></div><div class="c l" style="left:1574px;width:101px"><span class="bd gr">开阀</span></div><div class="c l" style="left:1675px;width:140px"><span class="num">2023-11-01</span></div></div>
<div class="row odd" style="top:396px"><div class="c rn" style="left:0px;width:31px">13</div><div class="c l" style="left:31px;width:201px">曾都区-碧桂园翠山蓝天3街</div><div class="c l" style="left:232px;width:101px"><svg class="ic" width="15" height="15" viewBox="0 0 15 15"><path d="M1.2 0.5V14.2H14.5" stroke="#2c3c48" stroke-width="1.4" fill="none"/><path d="M2 9.5Q7 -0.5 13.5 8.5" stroke="#c9514f" stroke-width="1.3" fill="none"/><path d="M1.8 2L7 9L13.8 3.5" stroke="#2f4fae" stroke-width="1.4" fill="none"/><path d="M2.5 12.5Q7.5 8 12.5 12.5" stroke="#3f9a45" stroke-width="1.3" fill="none"/></svg><span class="num">11150687</span></div><div class="c w" style="left:333px;width:121px">田冬梅(碧桂园翠山<br>蓝天3街8座502)</div><div class="c w" style="left:454px;width:121px">田冬梅(碧桂园翠山<br>蓝天3街8座502)</div><div class="c l" style="left:575px;width:101px"></div><div class="c l" style="left:676px;width:101px">NB物联网水表</div><div class="c l" style="left:777px;width:151px"><span class="num">805521241607</span></div><div class="c bdc" style="left:928px;width:102px"><span class="bd or">建档</span></div><div class="c r" style="left:1030px;width:101px"><span class="num">82.60</span></div><div class="c r" style="left:1131px;width:101px">0</div><div class="c l" style="left:1232px;width:100px"></div><div class="c l" style="left:1332px;width:142px"><span class="num">2023-11-01 05:44:00</span></div><div class="c r" style="left:1474px;width:100px"><span class="num">3.60</span></div><div class="c l" style="left:1574px;width:101px"><span class="bd gr">开阀</span></div><div class="c l" style="left:1675px;width:140px"><span class="num">2023-11-01</span></div></div>
<div class="row even" style="top:429px"><div class="c rn" style="left:0px;width:31px">14</div><div class="c l" style="left:31px;width:201px">曾都区-碧桂园翠山蓝天3街</div><div class="c l" style="left:232px;width:101px"><svg class="ic" width="15" height="15" viewBox="0 0 15 15"><path d="M1.2 0.5V14.2H14.5" stroke="#2c3c48" stroke-width="1.4" fill="none"/><path d="M2 9.5Q7 -0.5 13.5 8.5" stroke="#c9514f" stroke-width="1.3" fill="none"/><path d="M1.8 2L7 9L13.8 3.5" stroke="#2f4fae" stroke-width="1.4" fill="none"/><path d="M2.5 12.5Q7.5 8 12.5 12.5" stroke="#3f9a45" stroke-width="1.3" fill="none"/></svg><span class="num">11150691</span></div><div class="c w" style="left:333px;width:121px">碧桂园翠山蓝天3街<br>10座201</div><div class="c w" style="left:454px;width:121px">碧桂园翠山蓝天3街<br>10座201</div><div class="c l" style="left:575px;width:101px"></div><div class="c l" style="left:676px;width:101px">NB物联网水表</div><div class="c l" style="left:777px;width:151px"><span class="num">805521241640</span></div><div class="c bdc" style="left:928px;width:102px"><span class="bd or">建档</span></div><div class="c r" style="left:1030px;width:101px"><span class="num">184.62</span></div><div class="c r" style="left:1131px;width:101px">0</div><div class="c l" style="left:1232px;width:100px"></div><div class="c l" style="left:1332px;width:142px"><span class="num">2023-11-01 05:59:00</span></div><div class="c r" style="left:1474px;width:100px"><span class="num">3.60</span></div><div class="c l" style="left:1574px;width:101px"><span class="bd gr">开阀</span></div><div class="c l" style="left:1675px;width:140px"><span class="num">2023-11-01</span></div></div>
<div class="row odd" style="top:462px"><div class="c rn" style="left:0px;width:31px">15</div><div class="c l" style="left:31px;width:201px">曾都区-碧桂园翠山蓝天3街</div><div class="c l" style="left:232px;width:101px"><svg class="ic" width="15" height="15" viewBox="0 0 15 15"><path d="M1.2 0.5V14.2H14.5" stroke="#2c3c48" stroke-width="1.4" fill="none"/><path d="M2 9.5Q7 -0.5 13.5 8.5" stroke="#c9514f" stroke-width="1.3" fill="none"/><path d="M1.8 2L7 9L13.8 3.5" stroke="#2f4fae" stroke-width="1.4" fill="none"/><path d="M2.5 12.5Q7.5 8 12.5 12.5" stroke="#3f9a45" stroke-width="1.3" fill="none"/></svg><span class="num">11150715</span></div><div class="c w" style="left:333px;width:121px">邹耀东(碧桂园翠山<br>蓝天3街16座402)</div><div class="c w" style="left:454px;width:121px">邹耀东(碧桂园翠山<br>蓝天3街16座402)</div><div class="c l" style="left:575px;width:101px"></div><div class="c l" style="left:676px;width:101px">NB物联网水表</div><div class="c l" style="left:777px;width:151px"><span class="num">805521241760</span></div><div class="c bdc" style="left:928px;width:102px"><span class="bd or">建档</span></div><div class="c r" style="left:1030px;width:101px"><span class="num">0.85</span></div><div class="c r" style="left:1131px;width:101px">0</div><div class="c l" style="left:1232px;width:100px"></div><div class="c l" style="left:1332px;width:142px"><span class="num">2023-11-01 06:55:00</span></div><div class="c r" style="left:1474px;width:100px"><span class="num">3.60</span></div><div class="c l" style="left:1574px;width:101px"><span class="bd gr">开阀</span></div><div class="c l" style="left:1675px;width:140px"><span class="num">2023-11-01</span></div></div>
<div class="row even" style="top:495px"><div class="c rn" style="left:0px;width:31px">16</div><div class="c l" style="left:31px;width:201px">曾都区-碧桂园翠山蓝天3街</div><div class="c l" style="left:232px;width:101px"><svg class="ic" width="15" height="15" viewBox="0 0 15 15"><path d="M1.2 0.5V14.2H14.5" stroke="#2c3c48" stroke-width="1.4" fill="none"/><path d="M2 9.5Q7 -0.5 13.5 8.5" stroke="#c9514f" stroke-width="1.3" fill="none"/><path d="M1.8 2L7 9L13.8 3.5" stroke="#2f4fae" stroke-width="1.4" fill="none"/><path d="M2.5 12.5Q7.5 8 12.5 12.5" stroke="#3f9a45" stroke-width="1.3" fill="none"/></svg><span class="num">11150708</span></div><div class="c w" style="left:333px;width:121px">刘俊(碧桂园翠山蓝<br>天3街16座203)</div><div class="c w" style="left:454px;width:121px">刘俊(碧桂园翠山蓝<br>天3街16座203)</div><div class="c l" style="left:575px;width:101px"></div><div class="c l" style="left:676px;width:101px">NB物联网水表</div><div class="c l" style="left:777px;width:151px"><span class="num">805521241778</span></div><div class="c bdc" style="left:928px;width:102px"><span class="bd or">建档</span></div><div class="c r" style="left:1030px;width:101px"><span class="num">73.17</span></div><div class="c r" style="left:1131px;width:101px">0</div><div class="c l" style="left:1232px;width:100px"></div><div class="c l" style="left:1332px;width:142px"><span class="num">2023-11-01 07:04:00</span></div><div class="c r" style="left:1474px;width:100px"><span class="num">3.60</span></div><div class="c l" style="left:1574px;width:101px"><span class="bd gr">开阀</span></div><div class="c l" style="left:1675px;width:140px"><span class="num">2023-11-01</span></div></div>
<div class="row odd" style="top:528px"><div class="c rn" style="left:0px;width:31px">17</div><div class="c l" style="left:31px;width:201px">曾都区-碧桂园翠山蓝天3街</div><div class="c l" style="left:232px;width:101px"><svg class="ic" width="15" height="15" viewBox="0 0 15 15"><path d="M1.2 0.5V14.2H14.5" stroke="#2c3c48" stroke-width="1.4" fill="none"/><path d="M2 9.5Q7 -0.5 13.5 8.5" stroke="#c9514f" stroke-width="1.3" fill="none"/><path d="M1.8 2L7 9L13.8 3.5" stroke="#2f4fae" stroke-width="1.4" fill="none"/><path d="M2.5 12.5Q7.5 8 12.5 12.5" stroke="#3f9a45" stroke-width="1.3" fill="none"/></svg><span class="num">11150683</span></div><div class="c w" style="left:333px;width:121px">何巍(碧桂园翠山蓝<br>天3街8座3楼601)</div><div class="c w" style="left:454px;width:121px">何巍(碧桂园翠山蓝<br>天3街8座3楼601)</div><div class="c l" style="left:575px;width:101px"></div><div class="c l" style="left:676px;width:101px">NB物联网水表</div><div class="c l" style="left:777px;width:151px"><span class="num">805521242789</span></div><div class="c bdc" style="left:928px;width:102px"><span class="bd or">建档</span></div><div class="c r" style="left:1030px;width:101px"><span class="num">78.67</span></div><div class="c r" style="left:1131px;width:101px">0</div><div class="c l" style="left:1232px;width:100px"></div><div class="c l" style="left:1332px;width:142px"><span class="num">2023-11-01 07:08:00</span></div><div class="c r" style="left:1474px;width:100px"><span class="num">3.60</span></div><div class="c l" style="left:1574px;width:101px"><span class="bd gr">开阀</span></div><div class="c l" style="left:1675px;width:140px"><span class="num">2023-11-01</span></div></div>
<div class="row even" style="top:561px"><div class="c rn" style="left:0px;width:31px">18</div><div class="c l" style="left:31px;width:201px">曾都区-碧桂园翠山蓝天3街</div><div class="c l" style="left:232px;width:101px"><svg class="ic" width="15" height="15" viewBox="0 0 15 15"><path d="M1.2 0.5V14.2H14.5" stroke="#2c3c48" stroke-width="1.4" fill="none"/><path d="M2 9.5Q7 -0.5 13.5 8.5" stroke="#c9514f" stroke-width="1.3" fill="none"/><path d="M1.8 2L7 9L13.8 3.5" stroke="#2f4fae" stroke-width="1.4" fill="none"/><path d="M2.5 12.5Q7.5 8 12.5 12.5" stroke="#3f9a45" stroke-width="1.3" fill="none"/></svg><span class="num">11150682</span></div><div class="c w" style="left:333px;width:121px">曾鹏傲(碧桂园翠山<br>蓝天3街8座301)</div><div class="c w" style="left:454px;width:121px">曾鹏傲(碧桂园翠山<br>蓝天3街8座301)</div><div class="c l" style="left:575px;width:101px"></div><div class="c l" style="left:676px;width:101px">NB物联网水表</div><div class="c l" style="left:777px;width:151px"><span class="num">805521240807</span></div><div class="c bdc" style="left:928px;width:102px"><span class="bd or">建档</span></div><div class="c r" style="left:1030px;width:101px"><span class="num">69.06</span></div><div class="c r" style="left:1131px;width:101px">0</div><div class="c l" style="left:1232px;width:100px"></div><div class="c l" style="left:1332px;width:142px"><span class="num">2023-11-01 07:17:00</span></div><div class="c r" style="left:1474px;width:100px"><span class="num">3.60</span></div><div class="c l" style="left:1574px;width:101px"><span class="bd gr">开阀</span></div><div class="c l" style="left:1675px;width:140px"><span class="num">2023-11-01</span></div></div>
<div class="row odd" style="top:594px"><div class="c rn" style="left:0px;width:31px">19</div><div class="c l" style="left:31px;width:201px">曾都区-碧桂园翠山蓝天3街</div><div class="c l" style="left:232px;width:101px"><svg class="ic" width="15" height="15" viewBox="0 0 15 15"><path d="M1.2 0.5V14.2H14.5" stroke="#2c3c48" stroke-width="1.4" fill="none"/><path d="M2 9.5Q7 -0.5 13.5 8.5" stroke="#c9514f" stroke-width="1.3" fill="none"/><path d="M1.8 2L7 9L13.8 3.5" stroke="#2f4fae" stroke-width="1.4" fill="none"/><path d="M2.5 12.5Q7.5 8 12.5 12.5" stroke="#3f9a45" stroke-width="1.3" fill="none"/></svg><span class="num">11150690</span></div><div class="c w" style="left:333px;width:121px">王俊(碧桂园翠山蓝<br>天3街8座302)</div><div class="c w" style="left:454px;width:121px">王俊(碧桂园翠山蓝<br>天3街8座302)</div><div class="c l" style="left:575px;width:101px"></div><div class="c l" style="left:676px;width:101px">NB物联网水表</div><div class="c l" style="left:777px;width:151px"><span class="num">805521240811</span></div><div class="c bdc" style="left:928px;width:102px"></div><div class="c r" style="left:1030px;width:101px"><span class="num">50.12</span></div><div class="c r" style="left:1131px;width:101px">0</div><div class="c l" style="left:1232px;width:100px"></div><div class="c l" style="left:1332px;width:142px"><span class="num">2023-11-01 07:20:00</span></div><div class="c r" style="left:1474px;width:100px"><span class="num">3.60</span></div><div class="c l" style="left:1574px;width:101px"></div><div class="c l" style="left:1675px;width:140px"><span class="num">2023-11-01</span></div></div>
  </div>
  <div id="vscroll"><div class="th"></div><div class="tri" style="left:4px;top:7px;border-left:5px solid transparent;border-right:5px solid transparent;border-bottom:5px solid #a0a0a0"></div><div class="tri" style="left:3px;top:590px;border-left:5px solid transparent;border-right:5px solid transparent;border-top:5px solid #505050"></div></div>
  <div id="hscroll"><div class="th"></div><div class="tri" style="left:4px;top:3px;border-top:5px solid transparent;border-bottom:5px solid transparent;border-right:5px solid #a0a0a0"></div><div class="tri" style="left:1698px;top:3px;border-top:5px solid transparent;border-bottom:5px solid transparent;border-left:5px solid #505050"></div></div>
  <div id="corner"></div>
</div>

<div id="footer">
  <div id="pinfo">共<b>166</b>条，每页<b>100</b>条</div>
  <div class="pg" style="left:1521px;color:#c8c8c8">&lt;&lt;</div>
<div class="pg" style="left:1553px;color:#c8c8c8">&lt;</div>
<div class="pg" style="left:1585px;color:#d0343c;background:#f6f6f6">1</div>
<div class="pg" style="left:1617px;color:#222">2</div>
<div class="pg" style="left:1649px;color:#222">&gt;</div>
<div class="pg" style="left:1681px;color:#222">&gt;&gt;</div>
</div>
</body></html>
